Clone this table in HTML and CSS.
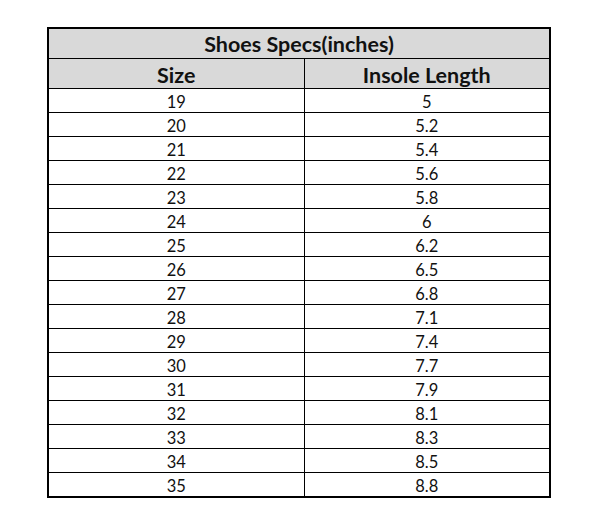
FILE: index.html
```html
<!DOCTYPE html>
<html>
<head>
<meta charset="utf-8">
<link rel="stylesheet" href="styles.css">
</head>
<body>
<div class="page">
<table class="specs">
  <colgroup><col class="col-size"><col class="col-len"></colgroup>
  <thead>
    <tr class="title-row"><th colspan="2">Shoes Specs(inches)</th></tr>
    <tr class="head-row"><th>Size</th><th>Insole Length</th></tr>
  </thead>
  <tbody>
    <tr><td>19</td><td>5</td></tr>
    <tr><td>20</td><td>5.2</td></tr>
    <tr><td>21</td><td>5.4</td></tr>
    <tr><td>22</td><td>5.6</td></tr>
    <tr><td>23</td><td>5.8</td></tr>
    <tr><td>24</td><td>6</td></tr>
    <tr><td>25</td><td>6.2</td></tr>
    <tr><td>26</td><td>6.5</td></tr>
    <tr><td>27</td><td>6.8</td></tr>
    <tr><td>28</td><td>7.1</td></tr>
    <tr><td>29</td><td>7.4</td></tr>
    <tr><td>30</td><td>7.7</td></tr>
    <tr><td>31</td><td>7.9</td></tr>
    <tr><td>32</td><td>8.1</td></tr>
    <tr><td>33</td><td>8.3</td></tr>
    <tr><td>34</td><td>8.5</td></tr>
    <tr><td>35</td><td>8.8</td></tr>
  </tbody>
</table>
</div>
</body>
</html>
```
FILE: styles.css
```css
html, body {
  margin: 0;
  padding: 0;
  background: #ffffff;
}
.page {
  padding: 27px 0 0 47px;
}
.specs {
  border-collapse: collapse;
  width: 502px;
  border: 2px solid #000;
  font-family: "Lato", "Open Sans", sans-serif;
  color: #111;
  table-layout: fixed;
}
.col-size { width: 256px; }
.col-len { width: 246px; }
.specs th, .specs td {
  padding: 0;
  text-align: center;
  vertical-align: middle;
  border: 1px solid #000;
  line-height: 1;
}
.title-row th {
  background: #d9d9d9;
  height: 27px;
  padding-top: 2px;
  font-size: 21.5px;
  font-weight: bold;
}
.head-row th {
  background: #d9d9d9;
  height: 25px;
  padding-top: 4px;
  font-size: 21.5px;
  font-weight: bold;
}
.specs td {
  height: 20px;
  padding-top: 3px;
  font-size: 16.5px;
}
```
